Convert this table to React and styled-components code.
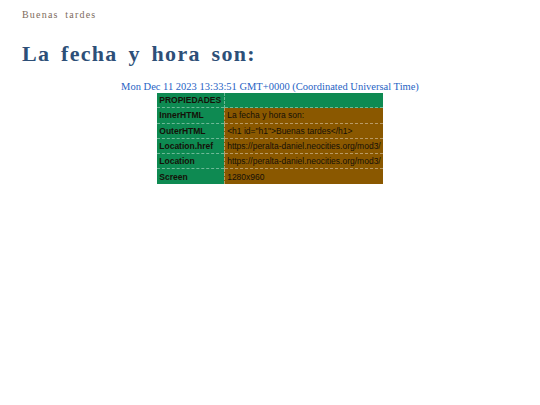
import React from "react";
import styled, { createGlobalStyle } from "styled-components";

const Global = createGlobalStyle`
  html, body { margin: 0; padding: 0; background: #ffffff; }
  body { font-family: "Liberation Serif", serif; }
`;

const Page = styled.div`
  padding: 9px 22px 0 22px;
  display: flex;
  flex-direction: column;
`;

const Greeting = styled.h1`
  margin: 0;
  font-family: "Liberation Serif", serif;
  font-weight: normal;
  font-size: 10px;
  letter-spacing: 1.2px;
  word-spacing: 3px;
  color: #7d6b5c;
  line-height: 12px;
`;

const Title = styled.h2`
  margin: 20px 0 0 0;
  font-family: "Liberation Serif", serif;
  font-weight: bold;
  font-size: 22px;
  letter-spacing: 1.3px;
  word-spacing: 4px;
  color: #2d4f78;
  line-height: 26px;
`;

const DateLine = styled.div`
  margin-top: 14px;
  text-align: center;
  font-family: "Liberation Serif", serif;
  font-size: 10.5px;
  line-height: 12px;
  color: #1f63c4;
`;

const Table = styled.table`
  margin: 0 auto;
  border-collapse: collapse;
  font-family: "Liberation Sans", Arial, sans-serif;
  font-size: 8.5px;
  color: #151008;
`;

const Cell = styled.td`
  height: 14.3px;
  padding: 0 2.5px;
  background: ${(p) => (p.$key ? "#0e8a52" : "#8a5800")};
  font-weight: ${(p) => (p.$key ? "bold" : "normal")};
  border-top: 1px dashed rgba(255, 255, 255, 0.4);
  border-left: ${(p) => (p.$key ? "none" : "1px dashed rgba(255,255,255,0.4)")};
  white-space: nowrap;
  width: ${(p) => (p.$key ? "61px" : "148px")};
`;

const HeadCell = styled(Cell)`
  background: #0e8a52;
  border-top: none;
`;

const rows = [
  ["InnerHTML", "La fecha y hora son:"],
  ["OuterHTML", '<h1 id="h1">Buenas tardes</h1>'],
  ["Location.href", "https://peralta-daniel.neocities.org/mod3/"],
  ["Location", "https://peralta-daniel.neocities.org/mod3/"],
  ["Screen", "1280x960"],
];

export default function App() {
  return (
    <>
      <Global />
      <Page>
        <Greeting>Buenas tardes</Greeting>
        <Title>La fecha y hora son:</Title>
        <DateLine>Mon Dec 11 2023 13:33:51 GMT+0000 (Coordinated Universal Time)</DateLine>
        <Table>
          <tbody>
            <tr>
              <HeadCell $key>PROPIEDADES</HeadCell>
              <HeadCell></HeadCell>
            </tr>
            {rows.map(([k, v]) => (
              <tr key={k}>
                <Cell $key>{k}</Cell>
                <Cell>{v}</Cell>
              </tr>
            ))}
          </tbody>
        </Table>
      </Page>
    </>
  );
}
